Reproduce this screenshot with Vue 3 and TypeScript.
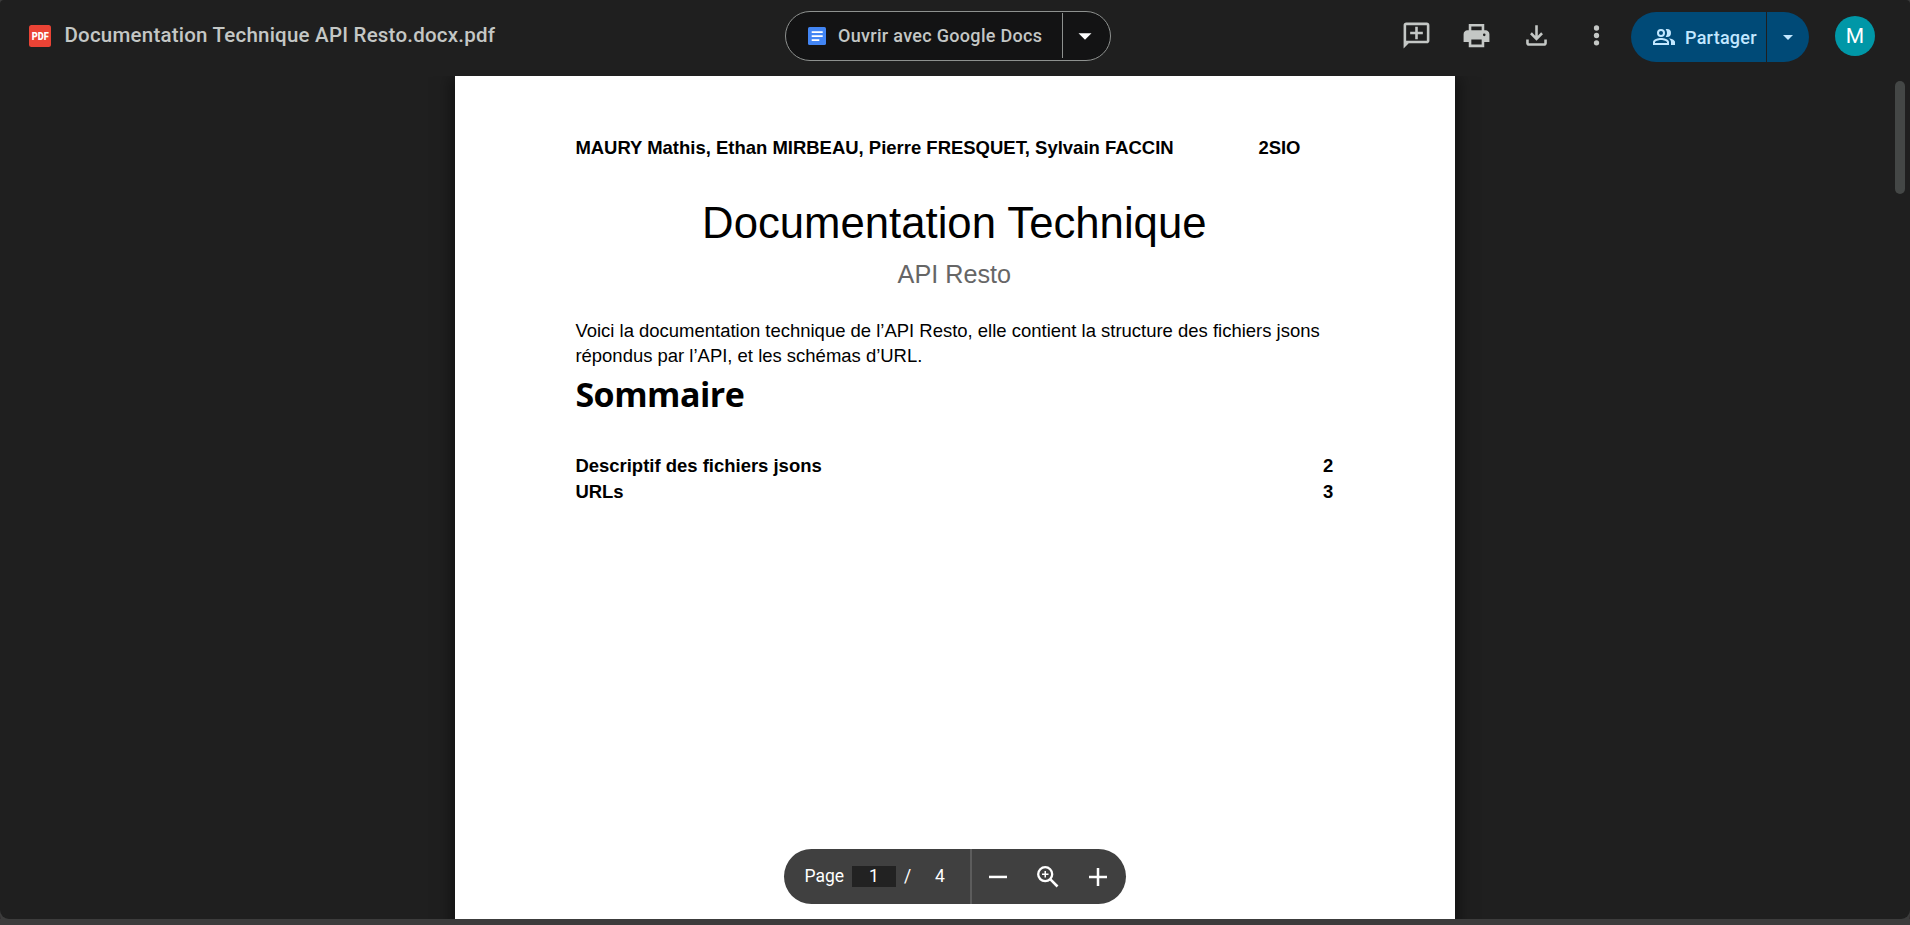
<script setup lang="ts">
interface TocEntry {
  label: string
  page: number
}

const fileName = 'Documentation Technique API Resto.docx.pdf'
const toc: TocEntry[] = [
  { label: 'Descriptif des fichiers jsons', page: 2 },
  { label: 'URLs', page: 3 },
]
const currentPage = 1
const pageCount = 4
</script>

<template>
  <div class="viewer">
    <header class="topbar">
      <div class="file">
        <svg class="pdf-icon" viewBox="0 0 22 22">
          <rect width="22" height="22" rx="2.5" fill="#ea4335" />
          <text x="2.8" y="14.6" textLength="17" lengthAdjust="spacingAndGlyphs">PDF</text>
        </svg>
        <h1 class="file-name">{{ fileName }}</h1>
      </div>

      <div class="open-with">
        <button class="open-main">
          <svg class="docs-icon" viewBox="0 0 18 18">
            <rect width="18" height="18" rx="1.6" fill="#4285f4" />
            <path d="M3.7 4.2h11v1.8h-11zM3.7 8.2h11V10h-11zM3.7 12.3h7.6v1.8H3.7z" fill="#fff" />
          </svg>
          <span>Ouvrir avec Google Docs</span>
        </button>
        <button class="open-more">
          <svg width="14" height="7" viewBox="0 0 14 7"><path d="M.5.3h13L7 6.8z" fill="#fff" /></svg>
        </button>
      </div>

      <div class="actions">
        <button class="icon-btn">
          <svg viewBox="0 0 24 24">
            <path fill-rule="evenodd" d="M22 4c0-1.1-.9-2-2-2H4c-1.1 0-2 .9-2 2v18l4-4h14c1.1 0 2-.9 2-2zM20 16H4V4h16z" />
            <path d="M11 5.2h2V9h3.9v2H13v3.900h-2V11H7.100V9H11z" />
          </svg>
        </button>
        <button class="icon-btn">
          <svg viewBox="0 0 24 24">
            <path fill-rule="evenodd" d="M19 8h-1V3H6v5H5c-1.660 0-3 1.340-3 3v6h4v4h12v-4h4v-6c0-1.660-1.340-3-3-3zM8 5h8v3H8zM16 19H8v-4h8zM18 12.500a1 1 0 1 1 0-2 1 1 0 0 1 0 2z" />
          </svg>
        </button>
        <button class="icon-btn">
          <svg viewBox="0 0 24 24">
            <path d="M12 16l-5-5 1.400-1.450L11 12.150V4h2v8.150l2.600-2.600L17 11zM6 20c-1.100 0-2-.9-2-2v-3h2v3h12v-3h2v3c0 1.100-.9 2-2 2z" />
          </svg>
        </button>
        <button class="icon-btn">
          <svg viewBox="0 0 24 24">
            <circle cx="12" cy="6.200" r="2.050" />
            <circle cx="12" cy="12" r="2.050" />
            <circle cx="12" cy="17.700" r="2.050" />
          </svg>
        </button>
      </div>

      <div class="share">
        <button class="share-main">
          <svg class="people" viewBox="1 4 22 16">
            <path fill-rule="evenodd" d="M9 4a4 4 0 1 0 0 8 4 4 0 0 0 0-8zm0 2a2 2 0 1 1 0 4 2 2 0 0 1 0-4zM9 13c-2.670 0-8 1.340-8 4v3h16v-3c0-2.660-5.330-4-8-4zm6 5H3v-.990C3.200 16.290 6.300 15 9 15s5.800 1.290 6 2z" />
            <path d="M15 12a4 4 0 0 0 0-8c-.470 0-.910.100-1.330.240A5.980 5.980 0 0 1 15 8c0 1.430-.520 2.740-1.330 3.760.420.140.860.240 1.330.240zM16.670 13.130C18.040 14.060 19 15.320 19 17v3h4v-3c0-2.180-3.570-3.470-6.330-3.870z" />
          </svg>
          <span>Partager</span>
        </button>
        <button class="share-more">
          <svg width="10" height="5" viewBox="0 0 10 5"><path d="M0 0h10L5 5z" fill="#c2e7ff" /></svg>
        </button>
      </div>

      <div class="avatar">M</div>
    </header>

    <main class="stage">
      <article class="page">
        <div class="authors">
          <span class="names">MAURY Mathis, Ethan MIRBEAU, Pierre FRESQUET, Sylvain FACCIN</span>
          <span>2SIO</span>
        </div>
        <h2 class="doc-title">Documentation Technique</h2>
        <p class="doc-subtitle">API Resto</p>
        <p class="intro">
          Voici la documentation technique de l’API Resto, elle contient la structure des fichiers jsons<br />
          répondus par l’API, et les schémas d’URL.
        </p>
        <h3 class="toc-title">Sommaire</h3>
        <ul class="toc">
          <li v-for="entry in toc" :key="entry.label">
            <span>{{ entry.label }}</span>
            <span>{{ entry.page }}</span>
          </li>
        </ul>
      </article>
      <div class="scroll-thumb"></div>
      <div class="pager">
        <div class="pager-pages">
          <span class="pager-label">Page</span>
          <span class="pager-input">{{ currentPage }}</span>
          <span class="pager-slash">/</span>
          <span class="pager-total">{{ pageCount }}</span>
        </div>
        <div class="pager-zoom">
          <svg width="18" height="18" viewBox="0 0 18 18"><path d="M0 7.700h18v2.500H0z" /></svg>
          <svg width="22" height="22" viewBox="0 0 22 22">
            <circle cx="8.200" cy="8.200" r="7" fill="none" stroke="#fff" stroke-width="2.300" />
            <path d="M7.500 5h1.500v2.500h2.500V9H9v2.500H7.500V9H5V7.500h2.500z" />
            <path d="M13.200 13.200L20.500 20.500" stroke="#fff" stroke-width="2.600" />
          </svg>
          <svg width="18" height="18" viewBox="0 0 18 18"><path d="M7.750 0h2.500v7.750H18v2.500h-7.750V18h-2.500v-7.750H0v-2.500h7.750z" /></svg>
        </div>
      </div>
    </main>
  </div>
</template>

<style>
html,
body {
  margin: 0;
  background: #3c3c3c;
  overflow: hidden;
}
</style>

<style scoped>
.viewer {
  box-sizing: border-box;
  position: relative;
  display: flex;
  flex-direction: column;
  width: 1910px;
  height: 919px;
  overflow: hidden;
  border-radius: 4px 4px 9px 9px;
  background: #1f1f1f;
  box-shadow: 0 5px 0 #3c3c3c, 0 6px 0 #2a2024;
  font-family: Roboto, "Liberation Sans", sans-serif;
}
button {
  display: flex;
  align-items: center;
  box-sizing: border-box;
  margin: 0;
  padding: 0;
  border: 0;
  background: none;
  color: inherit;
  font: inherit;
}
svg {
  display: block;
  flex: none;
}
.topbar {
  display: flex;
  align-items: flex-start;
  flex: none;
  height: 76px;
}
.file {
  display: flex;
  align-items: center;
  gap: 13.5px;
  box-sizing: border-box;
  width: 785px;
  height: 72px;
  padding-left: 29px;
}
.pdf-icon {
  width: 22px;
  height: 22px;
}
.pdf-icon text {
  fill: #fff;
  font: 900 10px Roboto, sans-serif;
}
.file-name {
  margin: 0 0 2px;
  color: #c4c7c5;
  font-size: 20.5px;
  font-weight: 500;
  line-height: 28px;
  letter-spacing: 0.22px;
}
.open-with {
  display: flex;
  box-sizing: border-box;
  width: 326px;
  height: 50px;
  margin-top: 11px;
  border: 1px solid #8e918f;
  border-radius: 25px;
  background: #131314;
  color: #c4c7c5;
}
.open-main {
  gap: 12px;
  width: 277px;
  height: 45px;
  margin-top: 1px;
  padding-left: 22px;
  border-right: 1px solid #8e918f;
  font-size: 18px;
  font-weight: 500;
  letter-spacing: 0.31px;
}
.docs-icon {
  width: 18px;
  height: 18px;
}
.open-more {
  height: 48px;
  padding-left: 15px;
}
.actions {
  display: flex;
  gap: 29px;
  margin: 20px 0 0 290px;
}
.icon-btn {
  width: 31px;
  height: 31px;
}
.icon-btn svg {
  width: 31px;
  height: 31px;
  fill: #c4c7c5;
}
.share {
  display: flex;
  width: 178px;
  height: 50px;
  margin: 12px 0 0 19px;
  border-radius: 25px;
  background: #004a77;
  color: #c2e7ff;
}
.share-main {
  gap: 10px;
  width: 136px;
  height: 50px;
  padding-left: 22px;
  border-right: 1px solid #1f1f1f;
  font-size: 18px;
  font-weight: 500;
  letter-spacing: 0.25px;
}
.people {
  width: 22px;
  height: 16px;
  fill: #c2e7ff;
}
.share-more {
  padding-left: 16px;
}
.avatar {
  width: 40px;
  height: 40px;
  margin: 16px 0 0 26px;
  border-radius: 50%;
  background: #0097a7;
  color: #fff;
  font-size: 21px;
  line-height: 41px;
  text-align: center;
}
.stage {
  display: flex;
  justify-content: center;
  flex: 1;
  min-height: 0;
  overflow: hidden;
}
.page {
  box-sizing: border-box;
  width: 1000px;
  height: 1414px;
  padding: 60px 121.8px 0 120.4px;
  background: #fff;
  box-shadow: 0 4px 16px 3px rgba(0, 0, 0, 0.5);
  color: #000;
  font-family: "Liberation Sans", Arial, sans-serif;
  font-size: 18.48px;
}
.authors {
  display: flex;
  font-weight: 700;
  line-height: 24px;
}
.names {
  width: 683px;
}
.doc-title {
  margin: 38px 0 0;
  font-size: 43.69px;
  font-weight: 400;
  line-height: 50px;
  text-align: center;
}
.doc-subtitle {
  margin: 11px 0 0;
  color: #666;
  font-size: 25.2px;
  line-height: 30px;
  text-align: center;
}
.intro {
  margin: 29px 0 0;
  line-height: 25px;
  white-space: nowrap;
}
.toc-title {
  margin: 6px 0 0;
  font-family: "Open Sans", "Noto Sans", sans-serif;
  font-size: 34px;
  font-weight: 700;
  line-height: 40px;
  letter-spacing: -0.5px;
}
.toc {
  margin: 39px 0 0;
  padding: 0;
  list-style: none;
  font-weight: 700;
}
.toc li {
  display: flex;
  justify-content: space-between;
  line-height: 26px;
}
.scroll-thumb {
  position: absolute;
  top: 81px;
  right: 5px;
  width: 10px;
  height: 113px;
  border-radius: 5px;
  background: #444746;
}
.pager {
  position: absolute;
  top: 849px;
  left: 784px;
  display: flex;
  width: 342px;
  height: 55px;
  border-radius: 27.5px;
  background: #404040;
  color: #fff;
  font-size: 17.5px;
}
.pager-pages {
  display: flex;
  align-items: center;
  box-sizing: border-box;
  width: 188px;
  padding-left: 20.5px;
  border-right: 2px solid #5c5c5c;
}
.pager-label,
.pager-slash,
.pager-total {
  margin-bottom: 1px;
}
.pager-label {
  width: 47.5px;
}
.pager-input {
  width: 44px;
  background: #222;
  line-height: 21px;
  text-align: center;
}
.pager-slash {
  width: 31px;
  box-sizing: border-box;
  margin-left: 8px;
}
.pager-zoom {
  display: flex;
  align-items: center;
  gap: 30px;
  padding-left: 17px;
}
.pager-zoom svg {
  fill: #fff;
}
</style>
